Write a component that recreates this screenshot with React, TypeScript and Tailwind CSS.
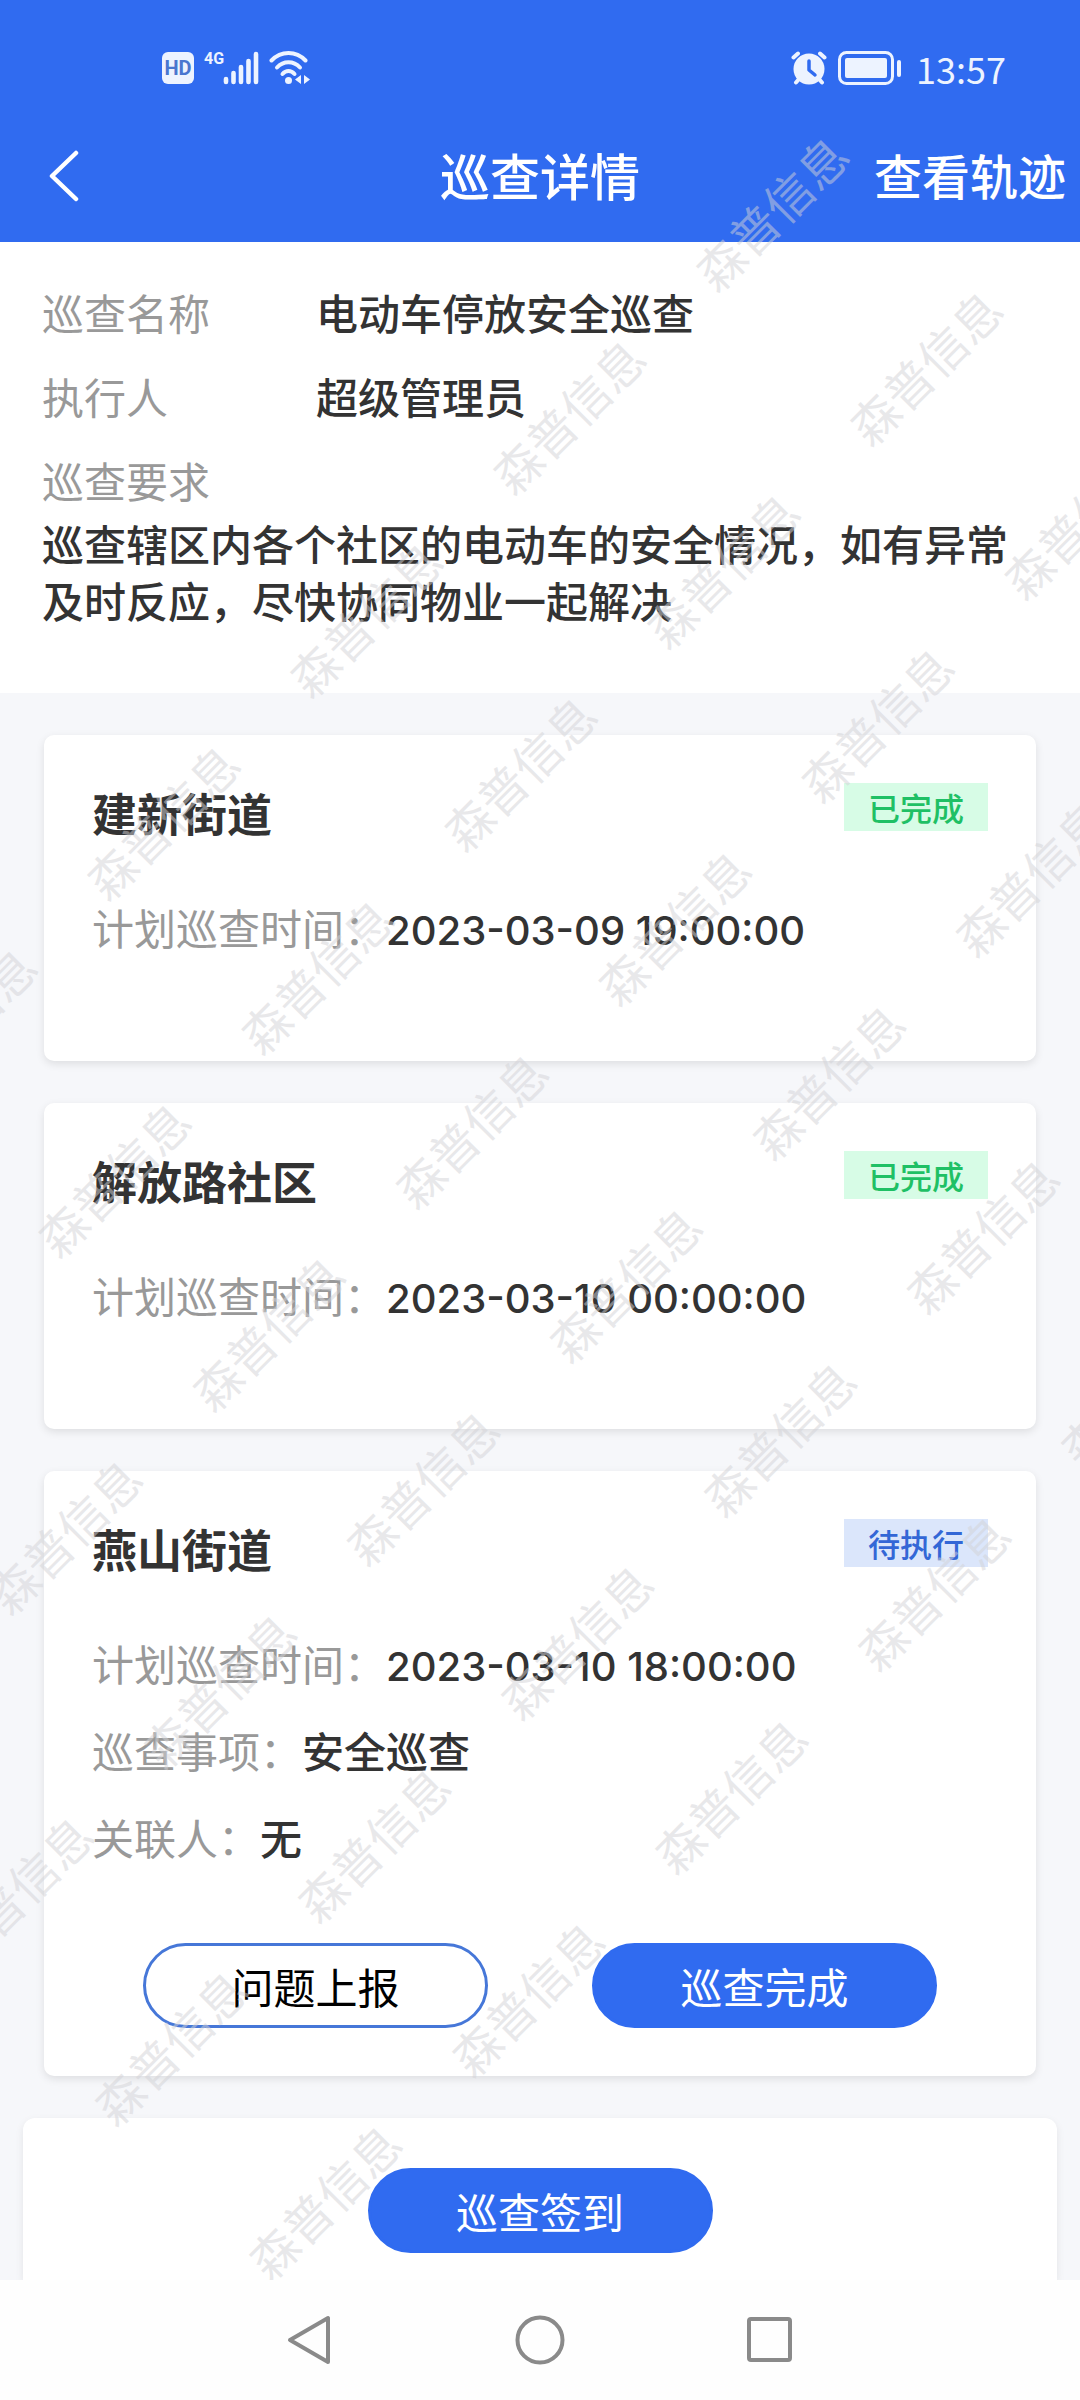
import type { ReactNode } from 'react'
import clsx from 'clsx'

type Status = 'done' | 'pending'

interface PatrolPoint {
  id: number
  name: string
  status: Status
  plannedAt: string
  matter?: string
  related?: string
}

const POINTS: PatrolPoint[] = [
  { id: 1, name: '建新街道', status: 'done', plannedAt: '2023-03-09 19:00:00' },
  { id: 2, name: '解放路社区', status: 'done', plannedAt: '2023-03-10 00:00:00' },
  { id: 3, name: '燕山街道', status: 'pending', plannedAt: '2023-03-10 18:00:00', matter: '安全巡查', related: '无' },
]

const STATUS_LABEL: Record<Status, string> = {
  done: '已完成',
  pending: '待执行',
}

export default function App() {
  return (
    <div className="flex min-h-screen flex-col bg-[#f6f7fa] font-['Noto_Sans_CJK_SC',sans-serif] text-[42px] text-[#333]">
      <div className="relative flex flex-1 flex-col overflow-hidden">
        <header className="bg-[#306bf0] text-white">
          <StatusBar />
          <div className="grid h-[132px] grid-cols-[1fr_auto_1fr] items-center px-[14px] font-medium">
            <button aria-label="返回" className="ml-[34px] justify-self-start">
              <svg className="h-[52px] w-8" viewBox="0 0 32 52" fill="none" stroke="currentColor" strokeWidth="4.5" strokeLinecap="round" strokeLinejoin="round">
                <path d="M28 3 4 26l24 23" />
              </svg>
            </button>
            <h1 className="pb-[5px] text-[50px] leading-[60px]">巡查详情</h1>
            <button className="justify-self-end pb-[5px] text-[48px] leading-[60px]">查看轨迹</button>
          </div>
        </header>

        <section className="bg-white px-[42px] pt-[41px] pb-[65px] leading-[57px]">
          <dl className="flex flex-col gap-[27px]">
            <InfoRow label="巡查名称">电动车停放安全巡查</InfoRow>
            <InfoRow label="执行人">超级管理员</InfoRow>
            <div>
              <dt className="text-[#999]">巡查要求</dt>
              <dd className="mt-[6px] font-medium">
                巡查辖区内各个社区的电动车的安全情况，如有异常及时反应，尽快协同物业一起解决
              </dd>
            </div>
          </dl>
        </section>

        <main className="flex flex-1 flex-col gap-[42px] pt-[42px]">
          {POINTS.map((point) => (
            <PointCard key={point.id} point={point} />
          ))}
          <div className="mx-[23px] flex flex-1 items-start justify-center rounded-t-xl bg-white px-12 pt-[50px] pb-6 shadow-[0_3px_8px_rgba(0,0,0,0.08)]">
            <ActionButton primary>巡查签到</ActionButton>
          </div>
        </main>

        <Watermark text="森普信息" />
      </div>
      <SystemNav />
    </div>
  )
}

function InfoRow({ label, children }: { label: string; children: ReactNode }) {
  return (
    <div className="flex">
      <dt className="w-[274px] text-[#999]">{label}</dt>
      <dd className="font-medium">{children}</dd>
    </div>
  )
}

function PointCard({ point }: { point: PatrolPoint }) {
  return (
    <article className="mx-11 rounded-[10px] bg-white p-12 shadow-[0_3px_8px_rgba(0,0,0,0.1)]">
      <div className="flex items-start justify-between">
        <h2 className="text-[45px] leading-[60px] font-bold">{point.name}</h2>
        <span
          className={clsx(
            'px-6 text-[32px] leading-[48px] font-medium',
            point.status === 'done' ? 'bg-[#d7fce6] text-[#1fc065]' : 'bg-[#dbe6fb] text-[#3367d6]'
          )}
        >
          {STATUS_LABEL[point.status]}
        </span>
      </div>

      <dl className="mt-[54px] mb-14 flex flex-col gap-[27px] leading-[60px]">
        <CardRow label="计划巡查时间：">
          <time className="block font-['Inter',sans-serif] text-[40px] leading-[48px]">{point.plannedAt}</time>
        </CardRow>
        {point.matter && <CardRow label="巡查事项：">{point.matter}</CardRow>}
        {point.related && <CardRow label="关联人：">{point.related}</CardRow>}
      </dl>

      {point.status === 'pending' && (
        <div className="mt-[76px] flex justify-center gap-[104px]">
          <ActionButton>问题上报</ActionButton>
          <ActionButton primary>巡查完成</ActionButton>
        </div>
      )}
    </article>
  )
}

function CardRow({ label, children }: { label: string; children: ReactNode }) {
  return (
    <div className="flex items-baseline">
      <dt className="text-[#999]">{label}</dt>
      <dd className="font-medium">{children}</dd>
    </div>
  )
}

function ActionButton({ primary, children }: { primary?: boolean; children: ReactNode }) {
  return (
    <button
      className={clsx(
        'h-[85px] w-[345px] rounded-full border-3',
        primary ? 'border-[#306bf0] bg-[#306bf0] text-white' : 'border-[#4677d8] bg-white text-black'
      )}
    >
      {children}
    </button>
  )
}

// Slanted text over the whole page, 7 columns by 6 rows
function Watermark({ text }: { text: string }) {
  return (
    <div aria-hidden="true" className="pointer-events-none absolute inset-x-0 top-0 -bottom-[120px] flex items-center justify-center pt-3 pl-3">
      <div className="grid shrink-0 -rotate-45 grid-cols-[repeat(7,287px)] auto-rows-[218px] place-items-center text-[48px] text-[#d2d2d6]/50">
        {[...Array(42)].map((_, i) => (
          <span key={i}>{text}</span>
        ))}
      </div>
    </div>
  )
}

function StatusBar() {
  return (
    <div className="flex h-[110px] items-center justify-between pt-[26px] pr-[74px] pl-[162px] text-[#edf3ff]">
      <div className="flex items-center">
        <span className="h-8 w-8 rounded-md bg-current text-center font-['Roboto',sans-serif] text-[20px] leading-8 font-bold">
          <span className="text-[#4a76cf]">HD</span>
        </span>
        <span className="ml-[10px] self-start font-['Roboto',sans-serif] text-[16px] leading-4 font-bold">4G</span>
        <svg className="-ml-px h-[34px] w-9" viewBox="0 0 36 34" stroke="currentColor" strokeWidth="4.6" strokeLinecap="round">
          <path d="M3 31v-3M10.500 31V22M18 31V16M25.500 31V10M33 31V3" />
        </svg>
        <svg className="ml-[10px] h-[34px] w-[42px]" viewBox="0 0 42 34" fill="none" stroke="currentColor" strokeWidth="4" strokeLinecap="round">
          <path d="M2.500 9.500C12-0.500 27-0.500 36.500 9.500" />
          <path d="M8 16.500c6.500-7 16.500-7 23 0" />
          <path d="M13.500 23c3.500-4 8.500-4 12 0" />
          <circle cx="19.500" cy="29.500" r="3.500" fill="currentColor" stroke="none" />
          <path d="M32 24v9l-6-4.500zM35 24v9l6-4.500z" fill="currentColor" stroke="none" />
        </svg>
      </div>

      <div className="flex items-center">
        <svg className="h-[34px] w-9" viewBox="0 0 36 34" fill="none" stroke="currentColor" strokeLinecap="round" strokeLinejoin="round">
          <circle cx="18" cy="18" r="15.500" fill="currentColor" stroke="none" />
          <path d="M2.500 6.500 7 2.500M33.500 6.500 29 2.500M8 28l-3 3.500M28 28l3 3.500" strokeWidth="4" />
          <path d="M18 10v9l6 5" stroke="#306bf0" strokeWidth="3.500" />
        </svg>
        <svg className="ml-[11px] h-[34px] w-16" viewBox="0 0 64 34" fill="none">
          <rect x="1.500" y="1.500" width="53" height="31" rx="7" stroke="currentColor" strokeWidth="3" />
          <rect x="7" y="7" width="42" height="20" rx="2" fill="currentColor" />
          <rect x="59" y="9" width="4" height="17" rx="2" fill="currentColor" />
        </svg>
        <span className="ml-[14px] text-[36px] leading-10">13:57</span>
      </div>
    </div>
  )
}

function SystemNav() {
  return (
    <nav className="relative flex h-[120px] items-center justify-center gap-[180px] bg-[#fefefe] text-[#8a8a8a]">
      <button aria-label="后退">
        <svg className="h-[50px] w-[50px]" viewBox="0 0 50 50" fill="none" stroke="currentColor" strokeWidth="4" strokeLinejoin="round">
          <path d="M43 3v44L5 25z" />
        </svg>
      </button>
      <button aria-label="主页">
        <svg className="h-[50px] w-[50px]" viewBox="0 0 50 50" fill="none" stroke="currentColor" strokeWidth="4">
          <circle cx="25" cy="25" r="22.500" />
        </svg>
      </button>
      <button aria-label="最近任务">
        <svg className="h-[50px] w-[50px]" viewBox="0 0 50 50" fill="none" stroke="currentColor" strokeWidth="4">
          <rect x="4" y="4" width="41" height="41" rx="2" />
        </svg>
      </button>
    </nav>
  )
}
